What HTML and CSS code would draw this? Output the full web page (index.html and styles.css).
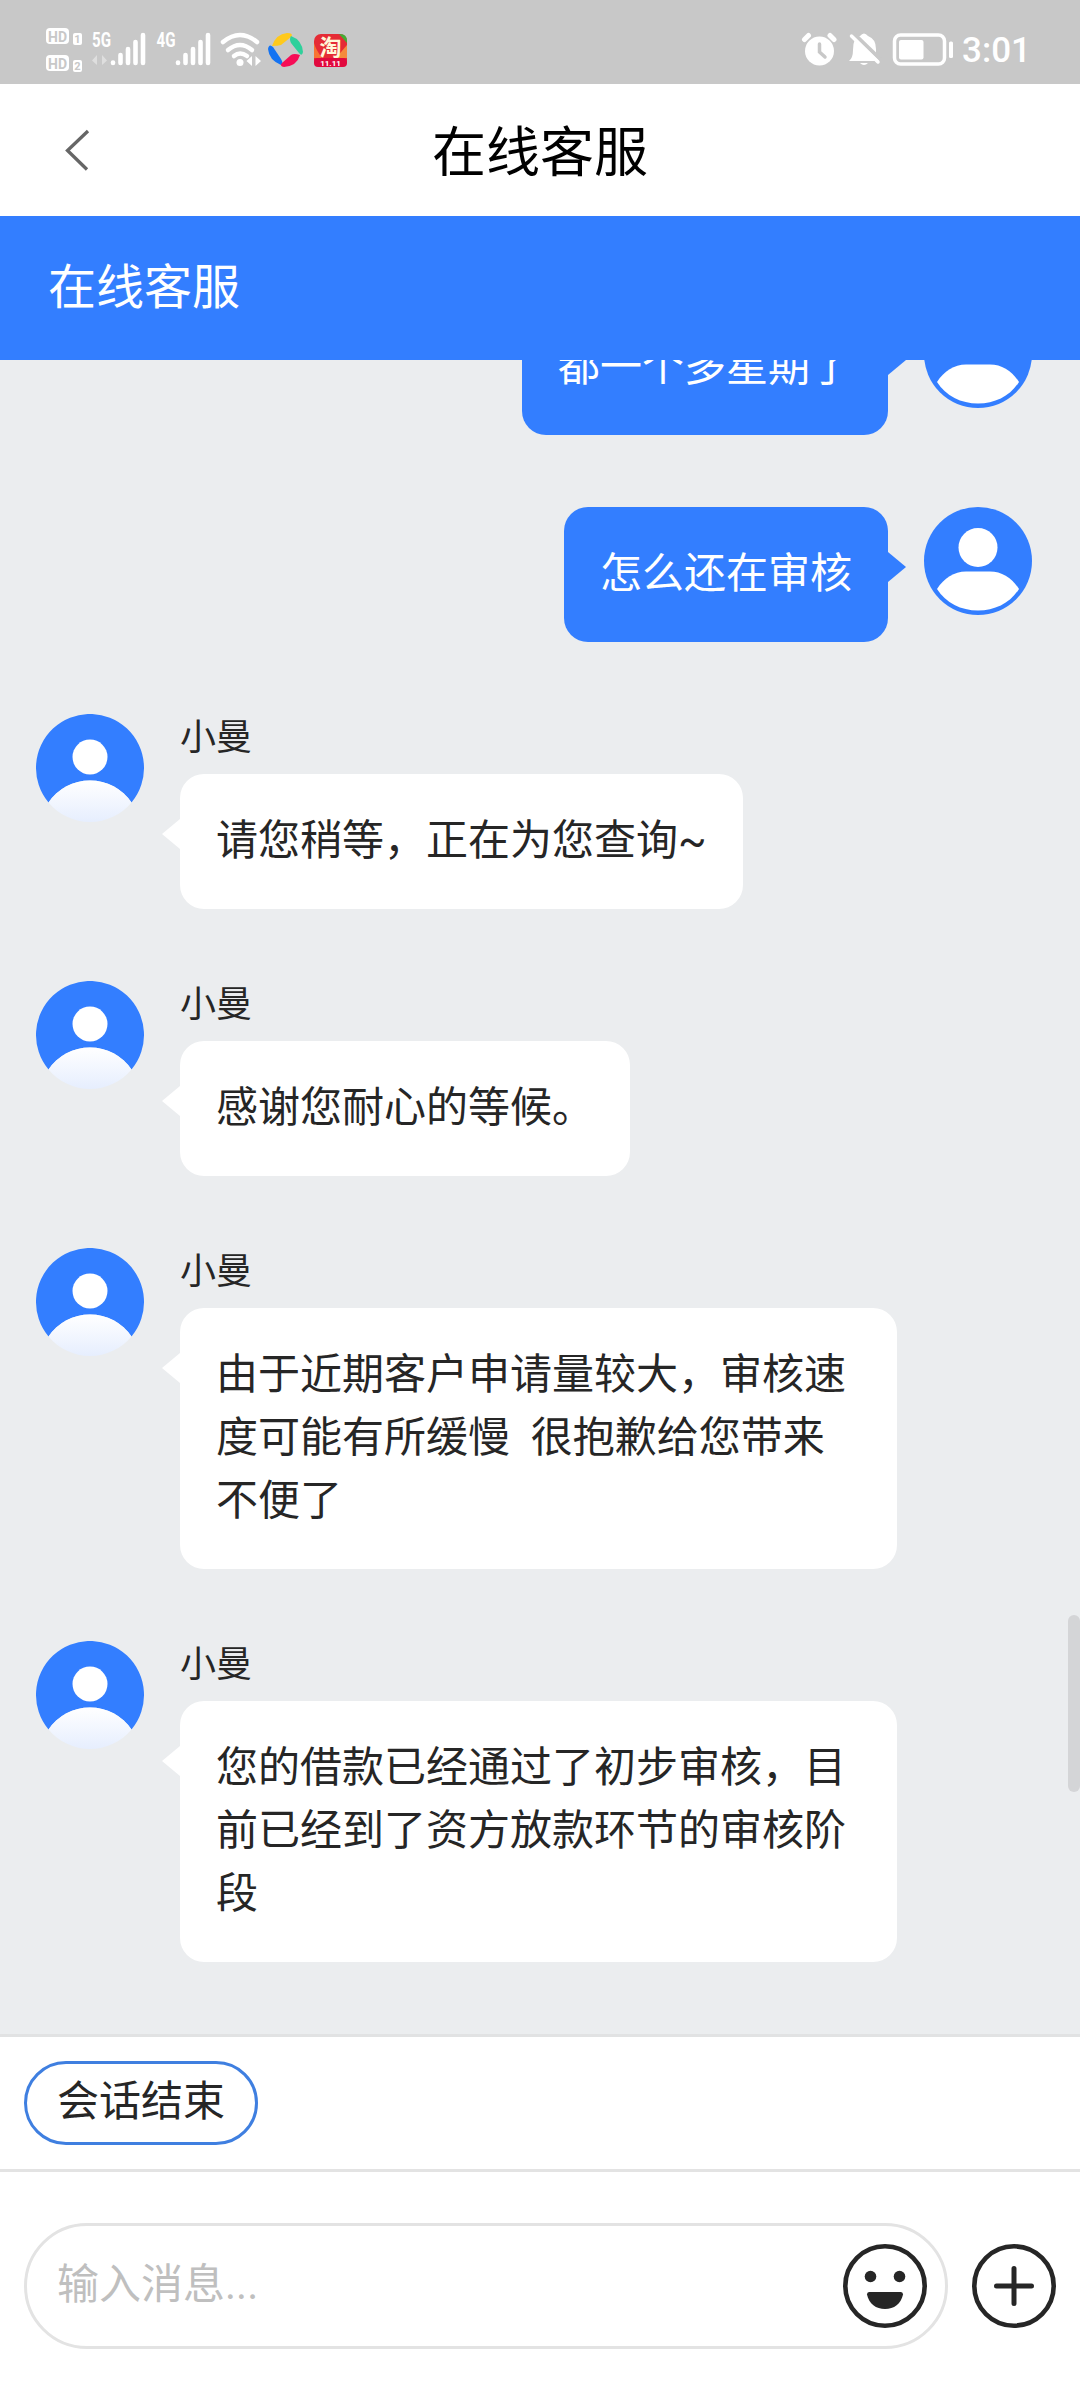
FILE: index.html
```html
<!DOCTYPE html>
<html lang="zh-CN">
<head>
<meta charset="utf-8">
<title>在线客服</title>
<link rel="stylesheet" href="styles.css">
</head>
<body>
<svg class="defs" width="0" height="0" aria-hidden="true">
  <defs>
    <linearGradient id="body-fade" x1="0" y1="0" x2="0" y2="1">
      <stop offset="0" stop-color="#ffffff"/>
      <stop offset="1" stop-color="#e6eefe"/>
    </linearGradient>
    <symbol id="agent" viewBox="0 0 108 108">
      <path d="M12.500 88.500A54 54 0 1 1 95.500 88.500A50 50 0 0 0 12.500 88.500Z" fill="#337eff"/>
      <circle cx="54" cy="43" r="17.500" fill="#fff"/>
      <path d="M12.500 88.500A50 50 0 0 1 95.500 88.500A54 54 0 0 1 12.500 88.500Z" fill="url(#body-fade)"/>
    </symbol>
    <symbol id="user" viewBox="0 0 108 108">
      <circle cx="54" cy="54" r="54" fill="#337eff"/>
      <circle cx="54" cy="40.500" r="19.500" fill="#fff"/>
      <path d="M13 82C20 71 30 64.500 42 64.500H66C78 64.500 88 71 95 82C86 96 71 103.500 54 103.500C37 103.500 22 96 13 82Z" fill="#fff"/>
    </symbol>
    <symbol id="signal" viewBox="0 0 36 34">
      <path d="M3 31V30.500M10.500 31V23M18 31V17M25.500 31V10M33 31V3" stroke="#fff" stroke-width="4.600" stroke-linecap="round"/>
    </symbol>
  </defs>
</svg>

<header class="status">
  <svg class="status-left" width="340" height="60" viewBox="30 18 340 60" fill="none">
    <rect x="46" y="28" width="23" height="16" rx="4" fill="#fff"/>
    <rect x="46" y="55" width="23" height="16" rx="4" fill="#fff"/>
    <rect x="73" y="33" width="9" height="12" rx="2" fill="#fff"/>
    <rect x="73" y="60" width="9" height="12" rx="2" fill="#fff"/>
    <text class="hd" x="57.500" y="41.500" text-anchor="middle">HD</text>
    <text class="hd" x="57.500" y="68.500" text-anchor="middle">HD</text>
    <text class="sim" x="77.500" y="43" text-anchor="middle">1</text>
    <text class="sim" x="77.500" y="70" text-anchor="middle">2</text>
    <text class="net" x="92" y="47" textLength="19" lengthAdjust="spacingAndGlyphs">5G</text>
    <path d="M97 55V65L92 60.500ZM102 55V65L107 60.500Z" fill="#dedede"/>
    <use href="#signal" x="110" y="32" width="36" height="34"/>
    <text class="net" x="156.500" y="47" textLength="19" lengthAdjust="spacingAndGlyphs">4G</text>
    <use href="#signal" x="175" y="32" width="36" height="34"/>
    <g stroke="#fff" stroke-width="4.500" stroke-linecap="round">
      <path d="M223 42Q240 28 257 42"/>
      <path d="M228 50Q240 40 252 50"/>
      <path d="M234 56Q240 51 247 56"/>
    </g>
    <circle cx="240" cy="62.500" r="3.500" fill="#fff"/>
    <path d="M252 56V66L246.500 61ZM255.500 56V66L261 61Z" fill="#fff"/>
    <path d="M272 46Q276 34 287 33Q294 33 291 37L281 45Q278 46 272 46Z" fill="#ffc91c"/>
    <path d="M291 36Q302 40 303 52Q302 57 299 53L291 43Q289 39 291 36Z" fill="#2fd09b"/>
    <path d="M281 65Q269 60 268 49Q269 43 273 47L281 59Q284 64 281 65Z" fill="#1473f2"/>
    <path d="M300 55Q297 66 284 67Q279 66 282 63L291 55Q294 53 300 55Z" fill="#f60d56"/>
    <rect x="314" y="34" width="33" height="33" rx="7" fill="#e52b35"/>
    <path d="M314 43Q316 50 322 58H314Z" fill="#f87432"/>
    <path d="M339 34H340Q347 34 347 41V43Z" fill="#43ad35"/>
    <path d="M336 58L347 45V58Z" fill="#f58a3c"/>
    <rect x="314" y="58" width="33" height="9" rx="4" fill="#e1093e"/>
    <text class="tao" x="330.500" y="55" text-anchor="middle">淘</text>
    <text class="sale" x="330.500" y="66" text-anchor="middle">11.11</text>
  </svg>
  <div class="status-right">
    <svg width="154" height="40" viewBox="804 30 154 40" fill="none">
      <path d="M807.500 39.500L811.500 35.500M833 35.500L837 39.500" stroke="#fff" stroke-width="5" stroke-linecap="round"/>
      <circle cx="822.500" cy="51" r="14.500" fill="#fff"/>
      <path d="M822.500 44V52L828 57" stroke="#c8c8c8" stroke-width="3.500" stroke-linecap="round"/>
      <path d="M852 61Q856 58 856 50Q856 37 863 36Q867 31 871 36Q879 39 879 49V56L882 61Z" fill="#fff"/>
      <path d="M863 63H871Q867 67 863 63Z" fill="#fff"/>
      <path d="M857 34L884 60" stroke="#c8c8c8" stroke-width="4"/>
      <path d="M854.500 36L881 62" stroke="#fff" stroke-width="3.500" stroke-linecap="round"/>
      <rect x="897.500" y="35" width="50" height="29" rx="6" stroke="#fff" stroke-width="3.500"/>
      <rect x="902" y="40" width="24.500" height="19.500" rx="2" fill="#fff"/>
      <rect x="952" y="41.500" width="4" height="16.500" rx="1.500" fill="#fff"/>
    </svg>
    <span class="clock">3:01</span>
  </div>
</header>

<nav class="nav">
  <svg class="back" width="28" height="42" viewBox="0 0 28 42" fill="none"><path d="M25 2L4.500 21.500L24 40.500" stroke="#666" stroke-width="3.300"/></svg>
  <h1 class="nav-title">在线客服</h1>
</nav>

<div class="banner">在线客服</div>

<main class="chat">
  <section class="mine">
    <p class="bubble">都一个多星期了</p>
    <svg class="avatar"><use href="#user"/></svg>
  </section>
  <section class="mine">
    <p class="bubble">怎么还在审核</p>
    <svg class="avatar"><use href="#user"/></svg>
  </section>
  <section class="theirs">
    <svg class="avatar"><use href="#agent"/></svg>
    <div class="content"><div class="name">小曼</div><p class="bubble">请您稍等，正在为您查询~</p></div>
  </section>
  <section class="theirs">
    <svg class="avatar"><use href="#agent"/></svg>
    <div class="content"><div class="name">小曼</div><p class="bubble">感谢您耐心的等候。</p></div>
  </section>
  <section class="theirs">
    <svg class="avatar"><use href="#agent"/></svg>
    <div class="content"><div class="name">小曼</div><p class="bubble">由于近期客户申请量较大，审核速度可能有所缓慢  很抱歉给您带来不便了</p></div>
  </section>
  <section class="theirs">
    <svg class="avatar"><use href="#agent"/></svg>
    <div class="content"><div class="name">小曼</div><p class="bubble">您的借款已经通过了初步审核，目前已经到了资方放款环节的审核阶段</p></div>
  </section>
  <i class="scrollbar"></i>
</main>

<div class="quick"><button class="chip">会话结束</button></div>

<footer class="composer">
  <div class="field">
    <span class="placeholder">输入消息...</span>
    <svg width="84" height="84" viewBox="0 0 84 84" fill="none">
      <circle cx="42" cy="42" r="39.700" stroke="#262626" stroke-width="4.600"/>
      <circle cx="27.500" cy="32.500" r="5.800" fill="#262626"/>
      <circle cx="56.500" cy="32.500" r="5.800" fill="#262626"/>
      <path d="M26 48H58Q60 48 60 50.500C58 60 51 65 42 65C33 65 26 60 24 50.500Q24 48 26 48Z" fill="#262626"/>
    </svg>
  </div>
  <svg width="84" height="84" viewBox="0 0 84 84" fill="none">
    <circle cx="42" cy="42" r="39.700" stroke="#262626" stroke-width="4.600"/>
    <path d="M42 24.500V59.500M24.500 42H59.500" stroke="#262626" stroke-width="5" stroke-linecap="round"/>
  </svg>
</footer>
</body>
</html>
```

FILE: styles.css
```css
* { box-sizing: border-box; margin: 0; }

body {
  width: 1080px;
  height: 2400px;
  overflow: hidden;
  display: flex;
  flex-direction: column;
  background: #fff;
  color: #262626;
  font-family: Roboto, "Noto Sans CJK SC", sans-serif;
}

svg { flex: none; display: block; }
.defs { position: absolute; }

.status {
  height: 84px;
  flex: none;
  display: flex;
  justify-content: space-between;
  background: #c8c8c8;
  padding: 18px 49px 0 30px;
}
.status-right { display: flex; gap: 7px; padding-top: 12px; }
.clock { color: #fff; font-size: 35px; font-weight: 500; line-height: 42px; }
.hd, .sim, .net, .sale { font-family: Roboto, sans-serif; font-weight: 700; }
.hd { font-size: 14px; fill: #c8c8c8; }
.sim { font-size: 11px; fill: #c8c8c8; }
.net { font-size: 21px; fill: #fff; }
.tao { font: 700 22px "Noto Sans CJK SC", sans-serif; fill: #fff8d8; }
.sale { font-size: 8px; fill: #fff; }

.nav {
  height: 132px;
  flex: none;
  display: grid;
  grid-template-columns: 1fr auto 1fr;
  align-items: center;
  padding: 0 63px;
}
.nav-title { padding-top: 8px; font-size: 54px; line-height: 80px; font-weight: 400; color: #000; }

.banner {
  height: 144px;
  flex: none;
  padding-left: 48px;
  background: #337eff;
  color: #fff;
  font-size: 48px;
  line-height: 143px;
}

.chat {
  height: 1674px;
  flex: none;
  position: relative;
  overflow: hidden;
  display: flex;
  flex-direction: column;
  justify-content: flex-end;
  gap: 72px;
  padding: 0 48px 72px 36px;
  background: #ebedef;
}
.mine, .theirs { display: flex; gap: 36px; align-items: flex-start; }
.mine { justify-content: flex-end; }
.avatar { width: 108px; height: 108px; }
.content { display: flex; flex-direction: column; align-items: flex-start; gap: 12px; }
.name { font-size: 36px; line-height: 48px; }

.bubble {
  position: relative;
  max-width: 717px;
  padding: 35px 36px 37px;
  border-radius: 24px;
  background: #fff;
  font-size: 42px;
  line-height: 63px;
  white-space: pre-wrap;
}
.bubble::before {
  content: "";
  position: absolute;
  top: 45px;
  left: -18px;
  border: solid transparent;
  border-width: 15px 18px 15px 0;
  border-right-color: #fff;
}
.mine .bubble { background: #337eff; color: #fff; }
.mine .bubble::before {
  left: auto;
  right: -18px;
  border-width: 15px 0 15px 18px;
  border-left-color: #337eff;
}

.scrollbar {
  position: absolute;
  right: 0;
  top: 1255px;
  width: 12px;
  height: 177px;
  border-radius: 6px;
  background: #d4d5d7;
}

.quick {
  height: 135px;
  flex: none;
  border-top: 3px solid #e1e2e3;
  padding: 24px;
}
.chip {
  display: block;
  height: 84px;
  padding: 0 30px 3px;
  border: 3px solid #3f7fe0;
  border-radius: 42px;
  background: #fff;
  color: #262626;
  font: 42px/72px Roboto, "Noto Sans CJK SC", sans-serif;
}

.composer {
  flex: 1;
  display: flex;
  align-items: center;
  gap: 24px;
  border-top: 3px solid #e3e3e3;
  padding: 0 24px;
}
.field {
  flex: 1;
  height: 126px;
  display: flex;
  align-items: center;
  justify-content: space-between;
  padding: 0 18px 0 30px;
  border: 3px solid #e3e3e3;
  border-radius: 63px;
}
.placeholder { padding-bottom: 3px; font-size: 42px; line-height: 63px; color: #bfbfbf; }
```
